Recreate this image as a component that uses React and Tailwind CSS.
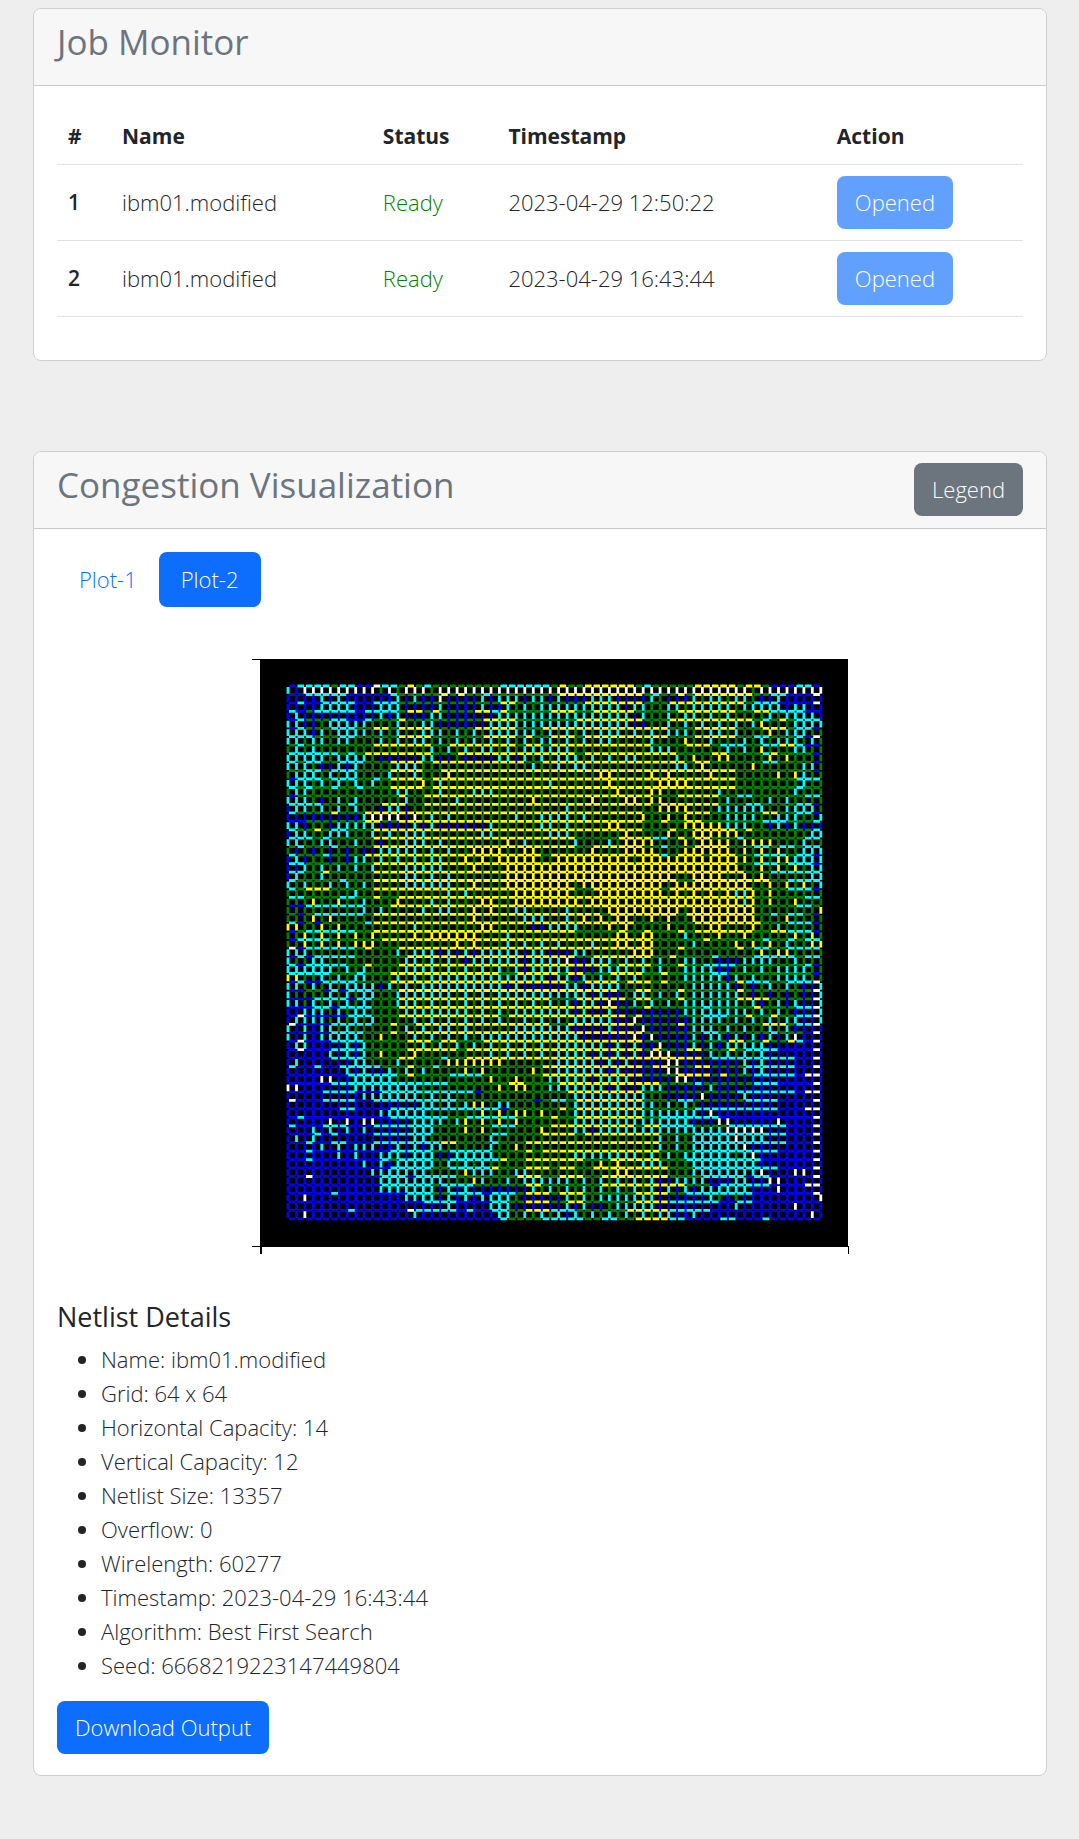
import React from 'react';

const COLORS = { b: '#0000ff', c: '#00ffff', g: '#008000', y: '#ffff00', w: '#ffffff' };

// Each row lists runs: a start index followed by a colour motif repeated up to the next start.
const HORIZONTAL = [
  '0b1c5g6c8b10w11c13g14y15g16c17g25c31g32y33g35y41g42c43g48y53g54y56g57b60c62b',
  '0b2c7b12c13g18y19g20y21g23c24g32y42g43c44g46y47g48y55g57c59b62w',
  '0b1c2b4c8b10c13g25y27g35y42g45y54g55c58b62w',
  '0c1b2g3c8b9c13g14y16g17y18g22y24c25y26g31y34g36y41g46y53g55y57c61b',
  '0b1c2g5c7b9c10g13y14g23y27g34y42g45y55g56c57g58y59g60c',
  '0b1c2g5c8g10y12g13y17g22y27g30y45g48y53g56y59g60c62b',
  '0c3g6c8g13y17g23y27g28y29g31y34g35y45g48y53g55c57g60c61b62w',
  '0g1c2g10y17g19y27g28y30g31y43g47y50g51c54g56c58y60c61b',
  '0c3c6g7c8g9y17g20y34g35y46g50y52g56c57y58g62b',
  '0c1g2c4g6c9g12y16g17y28g30y47g48y50g56c58g62b',
  '0g2c4g5c8g12y16g18y53g62b',
  '0b1c4g5c8g10c11g12y16g17y53g60c',
  '0c1g2c3g5c6g8c9g12y16g17y53g60c61g',
  '0b1g13y14g16y43g46y51g53c55g61c',
  '0c4g7c8g11y14g16y43g44y51g54c56g60c62b',
  '0c1g5y6g9y42g47y50g56y58g60c62b',
  '0b2g9y11g13y42g44y45g47y49g56c59g62c',
  '0c1g3y4g5c7g10y42g45y46g48y53g54y55g60g62c',
  '0c3g4c5g10y34g39y43c45g46y47g48y50g53c54g61c',
  '0g1c2g5c6g10y34g36y42g44c45g48y52g55c57g58c60g61c',
  '0c1g4c5g9y30g31y44c45g46y49g50y53g55c59g60c62b',
  '0c2g10y53g55c58g59c62b',
  '0c2g4y5g10y54g57c',
  '0c1g6c7g10y46g48y57g59c',
  '0c1g2y5g10y34g36y44g45y55g59c62b',
  '0c2g6c8g10y11g13y55g61c',
  '0b2c9g12y55g60c62g',
  '0g1b2g3c9g10y37g38y46g47y55g57c58g59c61g62b',
  '0c1b2g3b4g9c10y41g48y56g59c62b',
  '0b1g2c8g10y34g39y40g42y43g46y47g48y55g57y59c62b',
  '0b1c5g11y43g49y50g56c57g59c60g61c',
  '0w1b2c8g9y10g13y43g46y47g53y54g55c57g59c',
  '0b1c2b3c8g14y34g36y43g45y46g50c51g55c60g61c',
  '0c1b2c7g9y10g13y38g39y43g46y47g49c53g61c62b',
  '0c5g8c9g12y25g27y32g33y35g38y42g44y45g50c52g62b',
  '0b1c2b4c8g12y33g35y39g40y43g44y45g53y54c57g59c62w',
  '0b2g4b5c6b7c10g13y39g41y43g46y47g53y54g62w',
  '0b3c7b8c10g13y31g34y40g41y43g46y47g53y57g62w',
  '0b3c5b6c10g13y39g42y43g49c50g55y56g60c62w',
  '0b1w2b7c10g13y25g26y40g41y42g49c52g54y55g57y58g60c62w',
  '0w1b5c10g12y13g15y31g33y41g46y47g56y59g60c62w',
  '0b5c9g12y13g14y42g49c51g57c58g61b62w',
  '0b1w2b5c9g14y17g18y20g23y42g52y54g56y57g59y60c61b62w',
  '0b1w2b5c9g14y20g21y42g43y44g47y49g52y53g54c58b62w',
  '0b5c9g13y15g18c19g21y49g50c60b62w',
  '0c1b3c4b6c11g14y15g17c18g30y42g43y45g48y50g54c60b62w',
  '0b7c13g14y15g19c23g30y42g46y50g51y52g55c60b61w',
  '0b5c19g26y28g32y44g48c49g55c58b62w',
  '0b4c8b11c22b23g33y42g53c60b61w',
  '0w1b4c8b10c20g29b30g31c33g34y42g46c48g54c58b62w',
  '0b6c8b12c25b26g32y33g34y42g48c58b61w',
  '0b1c2b12c19g21c27g31y32g34y42g44c51b62w',
  '0c1b4c7b10c17g24c27g31y41g42y44c48g52c59b62w',
  '0b3c4b5c6b10c17g24c26g30y34g35y44g48c59b62w',
  '0b2c3b5c7b10c18y20g24c25g28y44g48c59b62w',
  '0b2c3b12c17g19c24g28y29g30y44g48c58b62w',
  '0b2c3b11c12g13c17g19c25y26g28y35g38y44g47c56b62w',
  '0b12c17g19c24y25g28y31g32y34g36y45g48c58b62w',
  '0b2w3b11c14b15c20g27y30g32y35g37y45g49c54b55c57b62w',
  '0b11c17g18c22g28y30g37y47g50b51c57b61w',
  '0b5c6b14c17g19c23b24c27g28y31g32y35g41y45g47c55b62w',
  '0b16c20b24c26g28y31g33y35g41y45c51b53c55b',
  '0b7c8b14w15c20b21c22b24c26g28y31c34g40y45c50b',
  '0b25c26g30c35g37c39g41y45c47b51c53b56c57b',
];

const VERTICAL = [
  '0c1b2w11g12w13g14w17g18w55g56w',
  '0b4cbcb8b13cb16b18w19b23c24b25c28b29c31b32c33b36c39b43c44g45b48cgc56b58c59b',
  '0b4c8b11c14b18c19b23c24b26cg31c40b41c43g45c47g48c53g54c59b60c62b',
  '0b1c2b11c12b13c14b17c19b25c41b42c43g45cg48cg54g57cg60c63b',
  '0c2b4g5c10g13c14g16c18b24c41b43g45cg56y57g60c',
  '0c3b4c5g6c10gc14g16c18cg24c29cg37c39cg46c48g50c52g53c54g57y58g59c62g',
  '0c2g3c5g6c8g11cg16cg24cg31cg37c39g43c44g47y48g50c51g54c55g56c57g58c60cg',
  '0g1c2gc5g17c18g19cg24cg29c34g43c46g52c53g54c55g56y57g60c62g',
  '0c5g6c10g11b16c17c18b20g21b25c27b28cg32c35g36cg41c42g46c47g48y49g51y53g57y58g59y60g',
  '0c3g4b6c7b8c9g13c16g29c30g32c33g34c36g46c48g49y50g55y56g61c63g',
  '0g1c3cg8c9g12c13g15c16g19y20g37yy39g43y44g45y46g50y51g58y59g60y61c62g',
  '0c3gc7gc12g16y17g18c19g31c32g38y39g44y48g61c62g',
  '0g1c3g13c15g18c19g22c25g39y40g43y45g51c52g60c61g',
  '0c3g4b5gc9g14c15g20c21g29y30g36y37g40y42g43y45g52c53g57c58g59c60g',
  '0b1c3gc9g11b12c14b15g33c34g44y48g51c57g59c63g',
  '0b9c10w14b15w16gc20g27c28g30c34g35c36g42y43g45yg48g52c56g58c61g63c',
  '0c2b3g5b6c11b15c16b17c18b24c25g30c32g33c34g38yy40g47y52c55g57b58c59b60c61b',
  '0b1c3g5c8g10cg14c17g23c25g31c34g40y41g45y46g48y54g62c',
  '0c2g4c6g8c9g11b12g14c17g18c19g26y27g28c29g34c35g38c39g40y44g47yg50y53g54y58g61c62g',
  '0g1b2gb10b11c16gc20g22y26g28y30g36y37g40y44g47y53g54yg60g61c',
  '0b1c2b3g5b6g7b8c10gc17c19g21yg25y30g32y41g42y54yg59y60c',
  '0b2cg10c11g14c19g22y23g26y54g56yg62c',
  '0b1c2g4c5g14c16gc20g26y46g48y52g54y55g56y57g62c',
  '0c1g2c3g5cg8gc10g14c20g22y23g26y34g35y45g46y55g57yg62g63c',
  '0g8c9g19c20g21c22g27y34g37y45gy52y53c55y56g57y58g',
  '0g3y4g6y7g9c10g13y14g17cgc20g23y25g27y35g36y54c55y56g57y58g60y61g',
  '0g9c10g11c12g16cgc20g22y23g24y25g27c29g33c34g38y47g48y56g63y',
  '0g3yg6g22y23g28c31g33c34g35yg39yy41g43yg47g48y56g59y60g',
  '0y2g4yg7g15c16g23y25g29b31c35g38yg41g45y46g50y52g55y56g58c59g',
  '0g2yg11g15yg18y23g26c27g39yyg45g47c48g51y52g54y55g60y61g62y63g',
  '0g2yg9y11g20yg23g26cg32c33g36c37g39y41g42y44g48c49g53yg58g59c60g62y',
  '0c3g13cg16c18b19c20b21c22b23c28b29c31b34c36g41y44g56yg59y60g',
  '0c1g3c5g14c16gc21b22c28b29c33w34b36c39g40cg45g47c49g51b54c58g60c61g',
  '0c5cg11g14c18gc28b29c34b37c41gc45g47c51b53g54cg58c62g',
  '0y2g4cg9c10g13cg18c31b32c34b35cg43g47c52b53cg57g58c62g',
  '0c2g3cg7c11b12cg17c26b27c28b33c35b36c40g48c53bg57cg61b63c',
  '0c1g5cg10c11g13c20gc26c36b37c38b40g41c43gc48c54gb61b63c',
  '0c2gc6gc10g13c16gc34b35c37b38w39b41cg47c54gcb60c61b63c',
  '0b2c4cg9c10g14c22gc28c34b35c36b38c39b47c49c55gc60b63c',
  '0b1c4cg11g14gc20gc27gc34c39b41w42b48c52gc60c61b63c',
  '0cb5cg9g14cg19cg23g27c34b38c39b42w43b48c51gc56gc60b',
  '0cb5c9g11y12g15cg24c31c35b41w42b43w44b48c49b50c52bc60w61b',
  '0b1c3b6bc10g15gc32c38bc43b44w45b48cb52c57b',
  '0b5cb9c10g11y12g15y16g24cg32c36bc43w46b50cg57b',
  '0b1c2b7b8c10g13c14g19y26g32c37bc41b45w47b50b54cb57b',
  '0b6bc11b12cg17g21y22g23y24g29y30g32c38bc41b45w47b54cb57b',
  '0b4w6b8c13g24y25g27y28g31c36b37c41b46w48b',
  '0w2b8c16g25y26g27y29g31c38bc41b42c45b50c51b',
  '0b9c15cg20g34c43g45b49w50b54c55b',
  '0b16c18gc22y24g25c27g34c43cg49b',
  '0b11c17g23yg28yg32g34c43c49b50w51b',
  '0b5w6b7w8b9w11b15c19gc21yg28g34c47c48b51w53b58w59b',
  '0b3cb6b7cb11b15c18g21yg25g30y31g34c36b37c43c52w57b',
  '0b1cb5b15c17g24c25g44cg48c53w54c57b',
  '0b4cb9c11b13cb17c19g24c25g27y28g44cg48c54w55b',
  '0b6cb9b11c14b15c18b20c24c25g34c42gc48c53gc55w56b',
  '0b9cb14c18gc24g37y38g39y40g42c45g48c56b',
  '0b10c17g21y22c25g27c29g39y41g48c56w57b60w62b63b',
  '0b11c19g22y23c24g26c27g28c33cg39cg44b46c50b53c55b57w59b',
  '0b11c18bc23b28b29cg37cg44bc49c55b58w59b',
  '0b2w3b14c18bc24c27g28b33cg38c44b50c51gb54b63w',
  '0b19c20b24c27b32bc37bg39c44b53c54b60w61b',
  '0b2w3b15c16b25c27gc33b34cg44c46b48c49b62w63b',
];

const LEFT = 36;
const TOP = 27;
const PITCH = 8.457;

function expand(row, length) {
  const runs = [...row.matchAll(/(\d+)([a-z]+)/g)].map((m) => [Number(m[1]), m[2]]);
  const cells = [];
  runs.forEach(([start, motif], i) => {
    const end = i + 1 < runs.length ? runs[i + 1][0] : length;
    for (let k = start; k < end; k++) cells[k] = motif[(k - start) % motif.length];
  });
  return cells;
}

function buildPaths() {
  const paths = { g: '', b: '', c: '', y: '', w: '' };
  HORIZONTAL.forEach((row, j) => {
    const y = (TOP + j * PITCH).toFixed(1);
    expand(row, 63).forEach((color, i) => {
      paths[color] += `M${(LEFT + i * PITCH + 1).toFixed(1)} ${y}h6.6`;
    });
  });
  VERTICAL.forEach((row, j) => {
    const y = (TOP + j * PITCH + 1).toFixed(1);
    expand(row, 64).forEach((color, i) => {
      paths[color] += `M${(LEFT + i * PITCH).toFixed(1)} ${y}v6.8`;
    });
  });
  return paths;
}

const PATHS = buildPaths();

function CongestionPlot() {
  return (
    <svg viewBox="0 0 598 595" className="w-[598px] max-w-full" role="img" aria-label="Routing congestion plot">
      <rect x="8" y="0" width="588" height="588" fill="#000" />
      <path d="M0 .5H8M0 587.5H8M596.5 587V595" stroke="#000" strokeWidth="1" />
      <path d="M9 587V595" stroke="#000" strokeWidth="2" />
      {Object.entries(PATHS).map(([key, d]) => (
        <path key={key} d={d} stroke={COLORS[key]} strokeWidth="2.8" fill="none" />
      ))}
    </svg>
  );
}

function Card({ title, action, children }) {
  return (
    <section className="overflow-hidden rounded-lg border border-[#cecece] bg-white">
      <header className="flex items-start justify-between border-b border-[#c9c9c9] bg-[#f7f7f7] px-[23px] py-[11px]">
        <h2 className="mb-[11px] text-[35px] leading-[43px] font-medium text-[#6c757d]">{title}</h2>
        {action}
      </header>
      <div className="p-[23px] pb-[21px]">{children}</div>
    </section>
  );
}

const BUTTON = 'h-[53px] rounded-lg px-[18px] text-white';

const JOBS = [
  { id: 1, name: 'ibm01.modified', time: '2023-04-29 12:50:22' },
  { id: 2, name: 'ibm01.modified', time: '2023-04-29 16:43:44' },
];

const DETAILS = [
  'Name: ibm01.modified',
  'Grid: 64 x 64',
  'Horizontal Capacity: 14',
  'Vertical Capacity: 12',
  'Netlist Size: 13357',
  'Overflow: 0',
  'Wirelength: 60277',
  'Timestamp: 2023-04-29 16:43:44',
  'Algorithm: Best First Search',
  'Seed: 6668219223147449804',
];

export default function App() {
  return (
    <main className="min-h-screen bg-[#eeeeee] pt-2 pr-8 pb-[60px] pl-[33px] font-['Open_Sans','Noto_Sans',sans-serif] text-[22px] leading-[33px] font-light text-[#212529]">
      <Card title="Job Monitor">
        <table className="mb-[22px] w-full table-fixed border-collapse text-left">
          <thead>
            <tr className="border-b border-[#dee2e6] text-[21px] font-semibold">
              <th scope="col" className="w-[54px] p-[11px]">#</th>
              <th scope="col" className="w-[27%] p-[11px]">Name</th>
              <th scope="col" className="w-[13%] p-[11px]">Status</th>
              <th scope="col" className="w-[34%] p-[11px]">Timestamp</th>
              <th scope="col" className="p-[11px]">Action</th>
            </tr>
          </thead>
          <tbody>
            {JOBS.map((job) => (
              <tr key={job.id} className="border-b border-[#dee2e6]">
                <th scope="row" className="p-[11px] text-[21px] font-semibold">{job.id}</th>
                <td className="p-[11px]">{job.name}</td>
                <td className="p-[11px] text-[#008000]">Ready</td>
                <td className="p-[11px]">{job.time}</td>
                <td className="p-[11px]">
                  <button type="button" disabled className={`${BUTTON} block bg-[#62a0ff]`}>Opened</button>
                </td>
              </tr>
            ))}
          </tbody>
        </table>
      </Card>

      <div className="mt-[90px]">
        <Card
          title="Congestion Visualization"
          action={<button type="button" className={`${BUTTON} bg-[#6c757d]`}>Legend</button>}
        >
          <nav className="flex">
            <button type="button" className="rounded-lg px-[22px] py-[11px] text-[#0d6efd]">Plot-1</button>
            <button type="button" className="rounded-lg bg-[#0d6efd] px-[22px] py-[11px] text-white">Plot-2</button>
          </nav>
          <div className="mt-[52px] flex justify-center pl-[21px]">
            <CongestionPlot />
          </div>
          <h3 className="mt-[46px] mb-[9px] text-[27px] leading-[33px] font-medium">Netlist Details</h3>
          <ul className="mb-[19px] list-disc pl-[44px] leading-[34px]">
            {DETAILS.map((line) => (
              <li key={line}>{line}</li>
            ))}
          </ul>
          <button type="button" className={`${BUTTON} block bg-[#0d6efd]`}>Download Output</button>
        </Card>
      </div>
    </main>
  );
}
